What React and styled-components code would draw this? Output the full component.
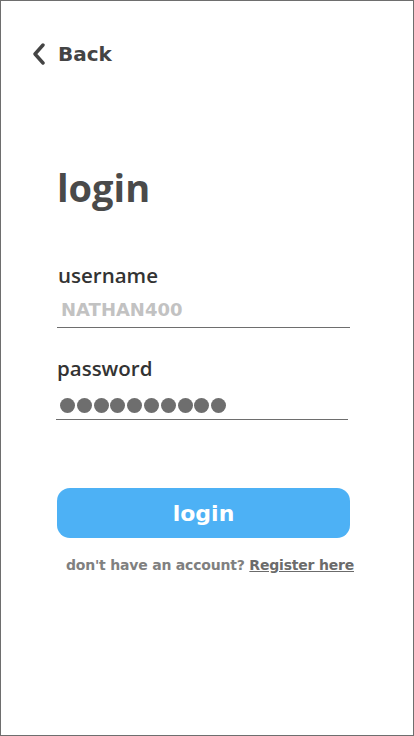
import React from 'react';
import styled, { createGlobalStyle } from 'styled-components';

const GlobalStyle = createGlobalStyle`
  html, body {
    margin: 0;
    padding: 0;
    background: #ffffff;
  }
  * {
    box-sizing: border-box;
  }
`;

const Screen = styled.div`
  width: 414px;
  height: 736px;
  border: 1px solid #6e6e6e;
  background: #ffffff;
  font-family: "DejaVu Sans", Verdana, sans-serif;
  position: relative;
  overflow: hidden;
`;

const BackButton = styled.button`
  display: flex;
  align-items: center;
  gap: 12px;
  margin: 41px 0 0 31px;
  padding: 0;
  border: none;
  background: none;
  cursor: pointer;
  color: #444444;
  font-family: "DejaVu Sans", Verdana, sans-serif;
  font-weight: 700;
  font-size: 20px;
  line-height: 24px;
`;

const Form = styled.form`
  display: flex;
  flex-direction: column;
  padding: 0 63px 0 56px;
  margin-top: 99px;
`;

const Title = styled.h1`
  margin: 0;
  font-family: "Open Sans", sans-serif;
  font-weight: 700;
  font-size: 38px;
  line-height: 44px;
  color: #4a4a4a;
`;

const Field = styled.div`
  display: flex;
  flex-direction: column;
  margin-top: ${({ $top }) => $top}px;
  margin-left: ${({ $indent }) => $indent || 0}px;
  margin-right: ${({ $right }) => $right || 0}px;
`;

const Label = styled.label`
  font-family: "Open Sans", sans-serif;
  font-weight: 600;
  font-size: 20.5px;
  line-height: 24px;
  color: #333333;
  padding-left: 1px;
`;

const Value = styled.div`
  display: flex;
  align-items: flex-end;
  height: ${({ $h }) => $h}px;
  padding: 0 0 ${({ $pb }) => $pb}px 4px;
  border-bottom: 1px solid #6e6e6e;
  font-weight: 700;
  font-size: 18px;
  line-height: 22px;
  color: ${({ $muted }) => ($muted ? '#c2c2c2' : '#6e6e6e')};
`;

const Dots = styled.div`
  display: flex;
  gap: 1.8px;
`;

const Dot = styled.span`
  width: 15px;
  height: 15px;
  border-radius: 50%;
  background: #6e6e6e;
`;

const SubmitButton = styled.button`
  margin-top: 68px;
  height: 50px;
  border: none;
  border-radius: 13px;
  background: #4db1f5;
  color: #ffffff;
  font-family: "DejaVu Sans", Verdana, sans-serif;
  font-weight: 700;
  font-size: 22px;
  cursor: pointer;
`;

const Footer = styled.p`
  margin: 19px 0 0 9px;
  font-weight: 700;
  font-size: 14px;
  color: #808080;
  white-space: nowrap;
  letter-spacing: -0.2px;
`;

const RegisterLink = styled.a`
  color: #6b6b6b;
  text-decoration: underline;
  cursor: pointer;
`;

const ChevronLeft = () => (
  <svg width="14" height="22" viewBox="0 0 14 22" fill="none">
    <path d="M11 2 L3 11 L11 20" stroke="#444444" strokeWidth="3.4" strokeLinecap="round" strokeLinejoin="round" />
  </svg>
);

export default function App() {
  return (
    <>
      <GlobalStyle />
      <Screen>
        <BackButton type="button">
          <ChevronLeft />
          Back
        </BackButton>
        <Form onSubmit={(e) => e.preventDefault()}>
          <Title>login</Title>
          <Field $top={54}>
            <Label>username</Label>
            <Value $muted $h={41} $pb={6}>NATHAN400</Value>
          </Field>
          <Field $top={28} $indent={-1} $right={2}>
            <Label>password</Label>
            <Value $h={40} $pb={6}>
              <Dots>
                {Array.from({ length: 10 }).map((_, i) => (
                  <Dot key={i} />
                ))}
              </Dots>
            </Value>
          </Field>
          <SubmitButton type="submit">login</SubmitButton>
          <Footer>
            don't have an account? <RegisterLink>Register here</RegisterLink>
          </Footer>
        </Form>
      </Screen>
    </>
  );
}
